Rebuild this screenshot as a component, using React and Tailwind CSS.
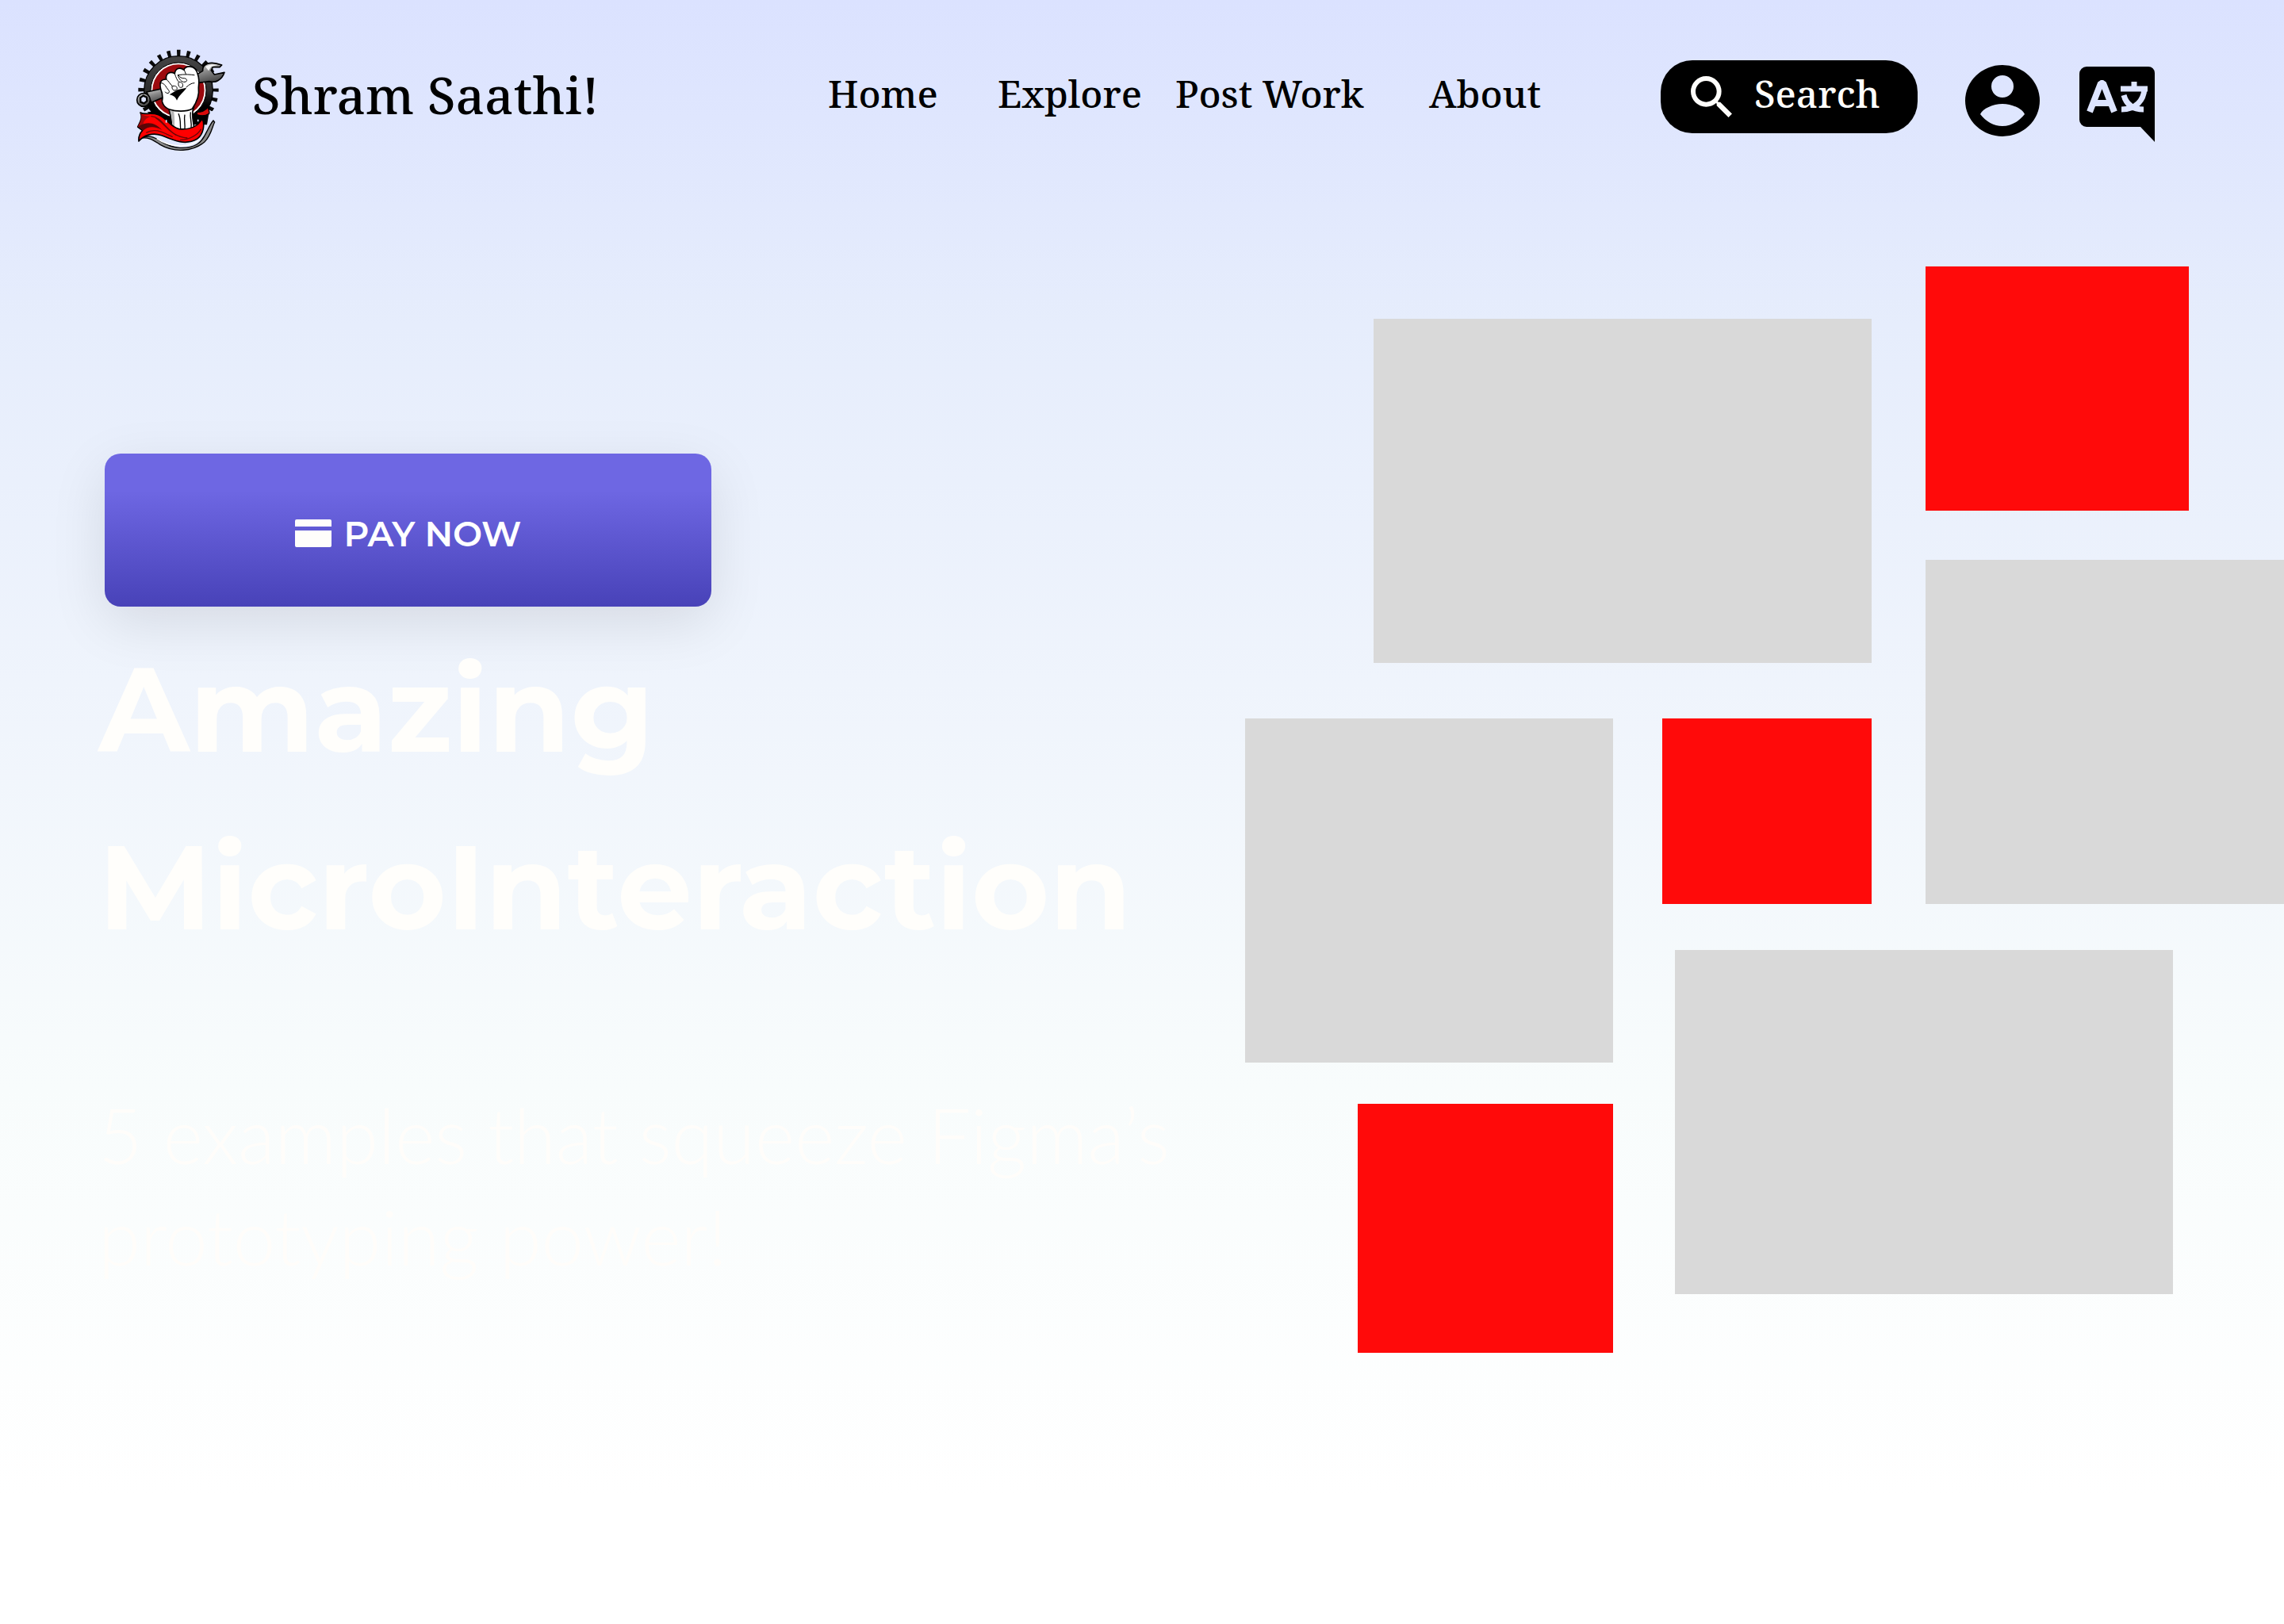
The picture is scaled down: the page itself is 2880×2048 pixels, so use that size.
const SERIF = "font-['Noto_Serif','DejaVu_Serif',serif]";

const links = ["Home", "Explore", "Post Work", "About"];

const tiles = [
  "bg-[#d9d9d9] col-[3/7] row-[2/5]",
  "bg-[#ff0a0a] col-[8/10] row-[1/3]",
  "bg-[#d9d9d9] col-[8/11] row-[4/7]",
  "bg-[#d9d9d9] col-[1/4] row-[6/9]",
  "bg-[#ff0a0a] col-[5/7] row-[6/7]",
  "bg-[#d9d9d9] col-[6/9] row-[8/11]",
  "bg-[#ff0a0a] col-[2/4] row-[10/12]",
];

function Logo() {
  return (
    <svg viewBox="0 0 375 420" className="h-[140px] w-[125px] shrink-0" role="img" aria-label="Shram Saathi logo">
      <defs>
        <linearGradient id="steel" x1="0" y1="0" x2="0.4" y2="1">
          <stop offset="0" stopColor="#e2e2e2" />
          <stop offset="0.5" stopColor="#8a8a8a" />
          <stop offset="1" stopColor="#4a4a4a" />
        </linearGradient>
        <linearGradient id="gear" x1="0" y1="0" x2="0" y2="1">
          <stop offset="0" stopColor="#454545" />
          <stop offset="0.5" stopColor="#2e2e2e" />
          <stop offset="0.72" stopColor="#000" />
        </linearGradient>
        <clipPath id="upper">
          <path d="M0 0H375V248H330L300 262H20V0Z" />
        </clipPath>
      </defs>
      <g clipPath="url(#upper)">
        <circle cx="180" cy="178" r="140" fill="none" stroke="#0a0a0a" strokeWidth="24" pathLength="240" strokeDasharray="3.6 6.4" strokeDashoffset="1.8" />
      </g>
      <circle cx="180" cy="180" r="130" fill="url(#gear)" stroke="#000" strokeWidth="4" />
      <path d="M62 262L120 310H288L300 240Z" fill="#000" />
      <circle cx="180" cy="180" r="105" fill="#fff" stroke="#000" strokeWidth="3" />
      <circle cx="180" cy="180" r="98" fill="#9c0a0e" />
      <path d="M250 262C262 264 284 256 292 243C294 256 299 260 296 268C284 276 266 278 250 272Z" fill="#d80a0a" stroke="#000" strokeWidth="4" />
      <path d="M34 362C64 346 88 356 116 374C158 402 214 404 250 384C282 366 290 318 312 294L317 300C308 316 304 352 278 376C232 412 164 416 112 386C82 366 62 354 34 362Z" fill="#8a8a8a" stroke="#000" strokeWidth="4" />
      <path d="M98 362C150 398 220 400 262 364" fill="none" stroke="#fff" strokeWidth="5" />
      <path d="M60 186L134 170L146 196L78 226Z" fill="url(#steel)" stroke="#000" strokeWidth="5" />
      <circle cx="48" cy="216" r="25" fill="url(#steel)" stroke="#000" strokeWidth="5" />
      <path d="M36 208L47 200L60 206L61 220L50 229L37 224Z" fill="#dbe2ff" stroke="#000" strokeWidth="7" />
      <path d="M238 128L272 106C270 78 300 68 344 84L336 92L310 92L304 104L316 120L354 112C344 142 320 152 296 146L252 152Z" fill="url(#steel)" stroke="#000" strokeWidth="5" strokeLinejoin="round" />
      <path d="M282 90C298 80 314 80 328 84L304 90L294 106Z" fill="#f4f4f4" />
      <path d="M144 250C152 280 156 300 154 328H240C238 300 226 270 238 244Z" fill="#fff" stroke="#000" strokeWidth="5" />
      <path d="M150 256L162 258C168 290 164 306 166 322H156C158 296 154 276 150 256Z" fill="#b5b5b5" />
      <path d="M180 268C190 290 186 308 188 324M204 272C200 292 206 308 204 324M226 262C222 286 232 302 228 322" fill="none" stroke="#000" strokeWidth="4" />
      <path d="M112 150C116 138 128 138 134 138C130 116 148 106 166 116C168 96 186 92 200 102C210 84 244 84 252 116C260 136 258 154 256 170C260 200 250 224 232 250C210 262 168 260 146 252C124 244 114 224 120 208L118 190C114 178 108 168 112 150Z" fill="#fff" stroke="#000" strokeWidth="5" strokeLinejoin="round" />
      <path d="M146 196L176 178L210 170C204 184 184 194 174 218C168 202 156 198 146 196Z" fill="#000" />
      <path d="M112 152C128 150 132 168 142 178C152 190 136 196 130 186M134 138C144 144 150 160 158 164C170 160 180 170 172 178C162 184 154 176 156 164M166 116C170 132 178 146 182 148C196 148 200 160 194 168C184 172 178 164 180 150M178 122C182 138 192 150 204 148C218 146 212 132 196 134C186 132 182 124 178 122C204 118 226 120 240 122M202 102C204 108 206 114 208 118M210 168C220 158 230 152 240 152" fill="none" stroke="#000" strokeWidth="3" strokeLinecap="round" />
      <path d="M36 264C52 274 76 262 104 272C136 284 148 318 182 326C220 330 254 318 270 286C280 308 276 346 250 364C204 392 150 364 116 350C82 338 48 350 30 372C28 352 36 340 44 332L26 318C34 302 46 284 36 264Z" fill="#f00" stroke="#000" strokeWidth="5" strokeLinejoin="round" />
      <path d="M36 264C44 276 60 278 76 278C50 286 44 304 48 318L26 318C34 302 46 284 36 264Z" fill="#a3080a" />
      <path d="M30 316C60 296 92 300 118 330C88 314 66 316 46 332Z" fill="#5c0506" />
      <path d="M76 278C116 280 130 326 172 350M94 284C130 306 150 356 214 360M58 340C92 320 122 340 158 356M186 368C222 366 252 350 266 326" fill="none" stroke="#6d0506" strokeWidth="4" />
      <path d="M134 292V302M254 290V298" stroke="#dbe2ff" strokeWidth="5" />
    </svg>
  );
}

function SearchIcon() {
  return (
    <svg viewBox="3 3 17.5 17.5" className="size-[52px] shrink-0" fill="#fffefb" aria-hidden="true">
      <path d="M15.5 14h-.79l-.28-.27A6.471 6.471 0 0 0 16 9.5 6.5 6.5 0 1 0 9.5 16c1.61 0 3.09-.59 4.23-1.57l.27.28v.79l5 4.99L20.49 19l-4.99-5zm-6 0C7.01 14 5 11.99 5 9.5S7.01 5 9.5 5 14 7.01 14 9.5 11.99 14 9.5 14z" />
    </svg>
  );
}

function AccountIcon() {
  return (
    <svg viewBox="0 0 94 90" className="h-[90px] w-[94px]" aria-hidden="true">
      <path
        fillRule="evenodd"
        d="M47 0A47 45 0 1 1 47 90A47 45 0 1 1 47 0ZM47 13A14 14 0 1 0 47 41A14 14 0 1 0 47 13ZM19 62C26 71 36 77 47 77C58 77 68 71 75 62C72 55 59 49 47 49C35 49 22 55 19 62Z"
      />
    </svg>
  );
}

function TranslateIcon() {
  return (
    <svg viewBox="0 0 96 95" className="h-[95px] w-24" aria-hidden="true">
      <path d="M9 0H87A8 8 0 0 1 95 8V95L77 76H9A9 9 0 0 1 0 67V9A9 9 0 0 1 9 0Z" />
      <g fill="none" stroke="#dde4ff">
        <path d="M13 57L27 21H30L44 57M18 46H39" strokeWidth="8" strokeLinejoin="bevel" />
        <path d="M69 19V27M52 28H86M82 28C81 42 72 54 53 54M56 36C59 47 67 54 81 54" strokeWidth="7" />
      </g>
    </svg>
  );
}

function CardIcon() {
  return (
    <svg viewBox="0 0 46 35" className="h-[35px] w-[46px]" fill="#fffefb" aria-hidden="true">
      <path d="M2 0H44A2 2 0 0 1 46 2V9H0V2A2 2 0 0 1 2 0ZM0 14H46V33A2 2 0 0 1 44 35H2A2 2 0 0 1 0 33Z" />
    </svg>
  );
}

export default function App() {
  return (
    <div className="min-h-screen overflow-hidden bg-[linear-gradient(180deg,#dbe2ff_0%,#e6edfc_20%,#eff4fc_42%,#f8fcfc_67%,#ffffff_92%)] text-black">
      <header className={`grid grid-cols-[1044fr_1050fr_786fr] items-start pt-[54px] font-medium ${SERIF}`}>
        <a href="#" className="flex items-start gap-7 pl-[165px]">
          <Logo />
          <span className="mt-[18px] text-[64px] leading-24 whitespace-nowrap">Shram Saathi!</span>
        </a>
        <nav className="mt-[30px] grid grid-cols-[214fr_224fr_320fr_292fr] text-5xl leading-[68px] whitespace-nowrap">
          {links.map((label) => (
            <a key={label} href="#">
              {label}
            </a>
          ))}
        </nav>
        <div className="flex items-start">
          <button type="button" className="mt-[22px] flex h-[92px] w-[324px] items-center gap-7 rounded-[40px] bg-black pl-[38px] text-[#fffefb]">
            <SearchIcon />
            <span className="pb-2 text-5xl leading-[68px]">Search</span>
          </button>
          <button type="button" aria-label="Account" className="mt-7 ml-[60px]">
            <AccountIcon />
          </button>
          <button type="button" aria-label="Change language" className="mt-[30px] ml-[50px]">
            <TranslateIcon />
          </button>
        </div>
      </header>

      <main className="mt-[142px] grid grid-cols-[1570fr_1310fr] items-start font-['Montserrat','Inter',sans-serif]">
        <section className="min-w-0 pt-[236px] pl-[124px]">
          <button
            type="button"
            className="ml-2 flex h-[193px] w-[765px] items-center justify-center gap-4 rounded-[20px] bg-[linear-gradient(180deg,#6e67e3_0%,#6e67e3_24%,#4842b8_100%)] pt-2 text-[44px] leading-14 font-semibold text-white shadow-[0_20px_70px_rgba(0,0,0,0.1)]"
          >
            <CardIcon />
            <span>PAY NOW</span>
          </button>
          <h1 className="mt-[18px] text-[150px] leading-[224px] font-bold whitespace-nowrap text-[#fffefb]">
            Amazing
            <br />
            MicroInteraction
          </h1>
          <p className="mt-[136px] font-['Lato',sans-serif] text-8xl leading-32 font-light whitespace-nowrap text-[#fffdfa]">
            5 examples that squeeze Figma’s
            <br />
            prototyping power!
          </p>
        </section>
        <section
          aria-label="Gallery"
          className="grid grid-cols-[142fr_20fr_302fr_62fr_16fr_248fr_68fr_312fr_20fr_120fr] grid-rows-[66px_242px_62px_130px_70px_234px_58px_142px_52px_240px_74px]"
        >
          {tiles.map((tile) => (
            <div key={tile} className={tile} />
          ))}
        </section>
      </main>
    </div>
  );
}
